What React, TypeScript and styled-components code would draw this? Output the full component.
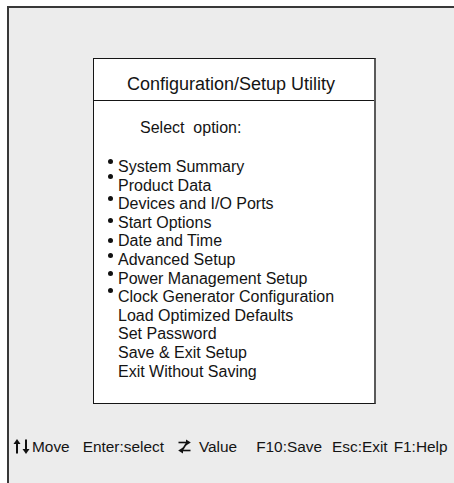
import React from "react";
import styled, { createGlobalStyle } from "styled-components";

const Global = createGlobalStyle`
  html, body { margin: 0; padding: 0; background: #ffffff; }
  body { font-family: "Liberation Sans", Arial, sans-serif; color: #141414; }
  * { box-sizing: border-box; }
`;

const Frame = styled.div`
  margin: 6px 0 0 7px;
  height: 477px;
  border-top: 2px solid #383838;
  border-left: 2px solid #383838;
  background: #ececec;
  overflow: hidden;
`;

const Dialog = styled.div`
  margin: 50px 0 0 84px;
  width: 283px;
  height: 346px;
  background: #ffffff;
  border-top: 1.5px solid #151515;
  border-left: 1.5px solid #151515;
  border-bottom: 1.5px solid #151515;
  border-right: 2px solid #5a5a5a;
`;

const Header = styled.div`
  height: 42px;
  padding: 14.5px 6px 0 0;
  border-bottom: 1.5px solid #151515;
  text-align: center;
  font-size: 18px;
  line-height: 20px;
`;

const Prompt = styled.div`
  margin-top: 17.5px;
  padding-left: 46px;
  font-size: 16px;
  line-height: 18.55px;
  white-space: pre;
`;

const List = styled.ul`
  list-style: none;
  margin: 21px 0 0 0;
  padding: 0 0 0 13.5px;
  display: flex;
  flex-direction: column;
`;

const Row = styled.li`
  display: flex;
  align-items: stretch;
  height: 18.6px;
  font-size: 16px;
  line-height: 18.6px;
`;

const BulletSlot = styled.span`
  display: flex;
  flex-direction: column;
  justify-content: center;
  width: 10.5px;
  flex: none;
`;

const Bullet = styled.span<{ $lift: number }>`
  flex: none;
  width: 5px;
  height: 5px;
  border-radius: 50%;
  background: #111;
  margin-bottom: ${(p) => p.$lift * 2}px;
`;

const Footer = styled.div`
  display: flex;
  align-items: center;
  margin-top: 33.5px;
  padding-left: 4px;
  height: 18px;
  font-size: 15.4px;
  line-height: 18px;
  white-space: nowrap;
`;

const Key = styled.span<{ $gap: number }>`
  margin-left: ${(p) => p.$gap}px;
`;

const IconWrap = styled.span<{ $gap: number }>`
  display: inline-flex;
  margin-left: ${(p) => p.$gap}px;
`;

const items: { label: string; lift?: number }[] = [
  { label: "System Summary", lift: 6 },
  { label: "Product Data", lift: 9 },
  { label: "Devices and I/O Ports", lift: 6 },
  { label: "Start Options", lift: 3 },
  { label: "Date and Time", lift: 1 },
  { label: "Advanced Setup", lift: 5 },
  { label: "Power Management Setup", lift: 5 },
  { label: "Clock Generator Configuration", lift: 7 },
  { label: "Load Optimized Defaults" },
  { label: "Set Password" },
  { label: "Save & Exit Setup" },
  { label: "Exit Without Saving" },
];

const UpDown = () => (
  <svg width="17" height="15" viewBox="0 0 17 15">
    <line x1="4" y1="4" x2="4" y2="14.5" stroke="#111" strokeWidth="2" />
    <polygon points="0.5,5 4,0 7.5,5" fill="#111" />
    <line x1="13" y1="0.5" x2="13" y2="11" stroke="#111" strokeWidth="2" />
    <polygon points="9.5,10 13,15 16.5,10" fill="#111" />
  </svg>
);

const Swap = () => (
  <svg width="13" height="15" viewBox="0 0 13 15">
    <line x1="0.5" y1="3.5" x2="10" y2="3.5" stroke="#111" strokeWidth="1.6" />
    <polygon points="8,0.5 12.8,3.5 8,6.5" fill="#111" />
    <line x1="9" y1="3.5" x2="4" y2="11.5" stroke="#111" strokeWidth="1.6" />
    <line x1="3" y1="11.5" x2="12.5" y2="11.5" stroke="#111" strokeWidth="1.6" />
    <polygon points="5,8.5 0.2,11.5 5,14.5" fill="#111" />
  </svg>
);

export default function App() {
  return (
    <>
      <Global />
      <Frame>
        <Dialog>
          <Header>Configuration/Setup Utility</Header>
          <Prompt>{"Select  option:"}</Prompt>
          <List>
            {items.map((it) => (
              <Row key={it.label}>
                <BulletSlot>{it.lift !== undefined && <Bullet $lift={it.lift} />}</BulletSlot>
                {it.label}
              </Row>
            ))}
          </List>
        </Dialog>
        <Footer>
          <IconWrap $gap={0}>
            <UpDown />
          </IconWrap>
          <Key $gap={2}>Move</Key>
          <Key $gap={13}>Enter:select</Key>
          <IconWrap $gap={14}>
            <Swap />
          </IconWrap>
          <Key $gap={8}>Value</Key>
          <Key $gap={19}>F10:Save</Key>
          <Key $gap={10}>Esc:Exit</Key>
          <Key $gap={6}>F1:Help</Key>
        </Footer>
      </Frame>
    </>
  );
}
